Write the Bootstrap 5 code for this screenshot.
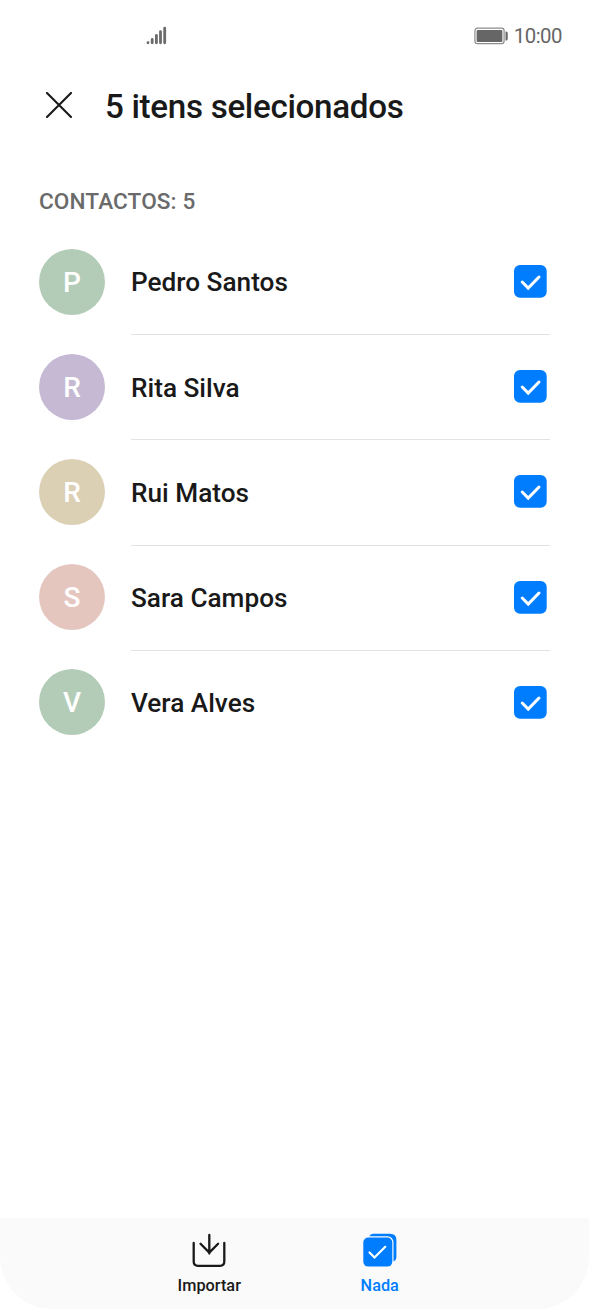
<!DOCTYPE html>
<html lang="pt">
<head>
<meta charset="utf-8">
<meta name="viewport" content="width=device-width, initial-scale=1">
<title>Contactos</title>
<link rel="stylesheet" href="https://cdn.jsdelivr.net/npm/bootstrap@5.3.0/dist/css/bootstrap.min.css">
<style>
body{font-family:Roboto,"Liberation Sans",sans-serif;color:#191919;background:#fff;overflow:hidden}
svg{display:block;flex:none}
.phone{height:1309px}
.status{height:72px;padding:0 27px 0 146px;color:#666;font-size:20.4px}
.clock{letter-spacing:-.5px;padding-top:1px}
.topbar{height:68px;padding-left:45px;gap:32px}
.topbar h1{font-size:33.2px;font-weight:500;line-height:68px;letter-spacing:-.32px;padding-top:1px}
.section-label{height:89px;padding:45px 39px 0;font-size:22.6px;line-height:34px;color:#6a6a6a;font-weight:500;letter-spacing:.1px}
.contacts{padding:0 39px}
.contact{height:105.2px;gap:26px}
.avatar{width:66px;height:66px;flex:none;color:#fff;font-size:28px;font-weight:500;line-height:67px}
.green{background:#b3ccb7}.purple{background:#c5b9d3}.sand{background:#dbcfb4}.rose{background:#e4c6bf}
.entry{height:106.2px;margin-bottom:-1px;font-size:26.2px;font-weight:500;padding-right:3px;border-bottom:1px solid #e3e3e3}
.entry span{padding-top:3px}
.contact:last-child .entry{border-color:transparent}
.actions{height:91px;background:#fafafa;border-radius:0 0 52px 52px;padding:14px 124px 0}
.action{width:170.5px;background:none;color:#191919;font-size:16.3px;font-weight:500;line-height:22px;gap:5.5px}
.action.current{color:#007dff}
</style>
</head>
<body>
<div class="phone d-flex flex-column">
  <div class="status d-flex align-items-center justify-content-between">
    <svg width="21" height="20" fill="none" stroke="#6b6b6b" stroke-width="2.8" stroke-linecap="round"><path d="M2 16.6v.2M6.2 13.4v3.4M10.4 9.4v7.4M14.5 5.6v11.2M18.7 2.2v14.6"/></svg>
    <div class="d-flex align-items-center">
      <svg width="39.5" height="20"><rect x=".9" y="2.2" width="29.2" height="15.4" rx="2.6" fill="none" stroke="#8c8c8c" stroke-width="1.2"/><rect x="2.6" y="3.9" width="25.8" height="12" rx="1" fill="#666"/><path d="M31.5 5.5h.7q1.5 0 1.5 1.5v6q0 1.5-1.5 1.5h-.7z" fill="#666"/></svg>
      <span class="clock">10:00</span>
    </div>
  </div>
  <header class="topbar d-flex align-items-center">
    <svg width="28" height="28" fill="none" stroke="#191919" stroke-width="2.1" stroke-linecap="round"><path d="M2 1 26 25M26 1 2 25"/></svg>
    <h1 class="m-0">5 itens selecionados</h1>
  </header>
  <div class="section-label">CONTACTOS: 5</div>
  <main class="contacts flex-grow-1">
    <div class="contact d-flex align-items-center"><div class="avatar green rounded-circle text-center">P</div><div class="entry d-flex align-items-center justify-content-between flex-grow-1"><span>Pedro Santos</span><svg width="33" height="33"><use href="#check"/></svg></div></div>
    <div class="contact d-flex align-items-center"><div class="avatar purple rounded-circle text-center">R</div><div class="entry d-flex align-items-center justify-content-between flex-grow-1"><span>Rita Silva</span><svg width="33" height="33"><use href="#check"/></svg></div></div>
    <div class="contact d-flex align-items-center"><div class="avatar sand rounded-circle text-center">R</div><div class="entry d-flex align-items-center justify-content-between flex-grow-1"><span>Rui Matos</span><svg width="33" height="33"><use href="#check"/></svg></div></div>
    <div class="contact d-flex align-items-center"><div class="avatar rose rounded-circle text-center">S</div><div class="entry d-flex align-items-center justify-content-between flex-grow-1"><span>Sara Campos</span><svg width="33" height="33"><use href="#check"/></svg></div></div>
    <div class="contact d-flex align-items-center"><div class="avatar green rounded-circle text-center">V</div><div class="entry d-flex align-items-center justify-content-between flex-grow-1"><span>Vera Alves</span><svg width="33" height="33"><use href="#check"/></svg></div></div>
  </main>
  <nav class="actions d-flex">
    <button class="action border-0 p-0 d-flex flex-column align-items-center">
      <svg width="36" height="37" fill="none" stroke="#191919" stroke-width="2.3" stroke-linecap="round" stroke-linejoin="round"><path d="M2.7 11v18.5q0 4.3 4.3 4.3h22q4.3 0 4.3-4.3V11M18.3 3v18.5M9.5 11.8l8.8 8.8 8.8-8.8"/></svg>
      <span>Importar</span>
    </button>
    <button class="action current border-0 p-0 d-flex flex-column align-items-center">
      <svg width="36" height="37"><path d="M7 4.6Q8.500 1.700 11 1.700h17.200q6.200 0 6.200 6.200v17.600q0 2.500-2.900 4L20 10z" fill="#007dff"/><rect x="0" y="4.200" width="31.500" height="32" rx="6" fill="#fafafa"/><rect x="1.300" y="5.600" width="29" height="29" rx="5" fill="#007dff"/><path d="M7.500 20.500l5 5L23.300 14.800" fill="none" stroke="#fff" stroke-width="2.200" stroke-linecap="round"/></svg>
      <span>Nada</span>
    </button>
  </nav>
</div>
<svg width="0" height="0" aria-hidden="true"><defs><g id="check"><rect width="32.700" height="32.700" rx="6" fill="#007dff"/><path d="M8.200 17l6 6L25 12" fill="none" stroke="#fff" stroke-width="3" stroke-linecap="round"/></g></defs></svg>
<script src="https://cdn.jsdelivr.net/npm/bootstrap@5.3.0/dist/js/bootstrap.bundle.min.js"></script>
</body>
</html>
